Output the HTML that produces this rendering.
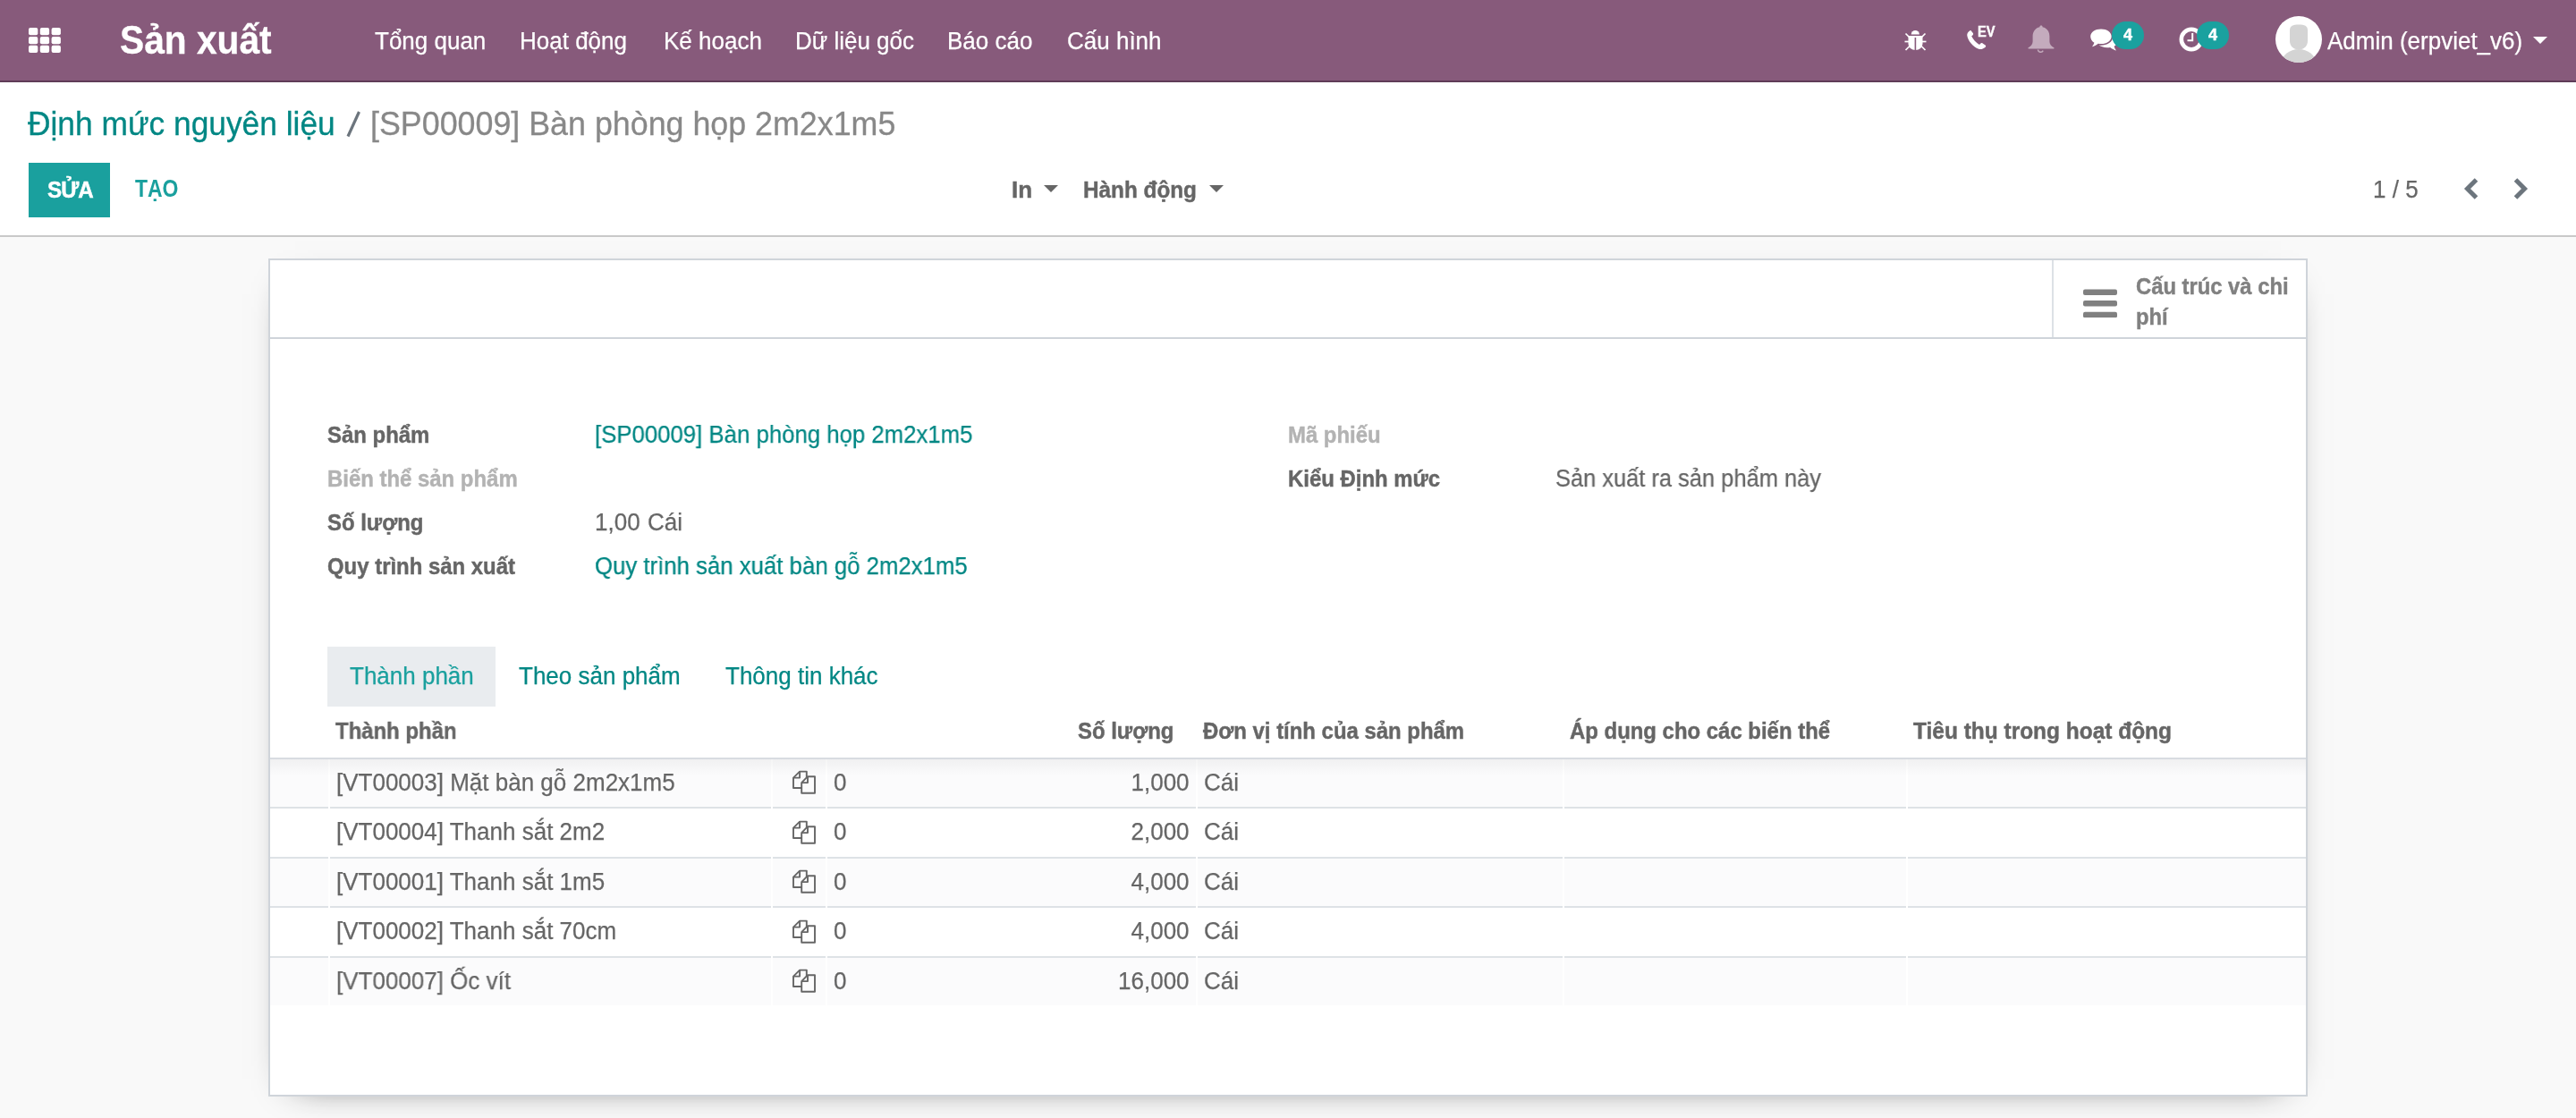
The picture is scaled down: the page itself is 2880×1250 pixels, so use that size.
<!DOCTYPE html>
<html><head><meta charset="utf-8"><title>Odoo</title>
<style>
html,body{margin:0;padding:0;width:2880px;height:1250px;overflow:hidden;background:#f9f9f9;font-family:"Liberation Sans",sans-serif;}
.a{position:absolute;}
.t{position:absolute;white-space:nowrap;line-height:1;font-size:26px;}
.b{font-weight:bold;transform-origin:0 0;-webkit-text-stroke:0.45px currentColor;}
.sx{transform:scaleX(0.92);}
#nav{left:0;top:0;width:2880px;height:90px;background:#875A7B;border-bottom:2px solid #5f3c57;}
.nv{color:#fff;}
#cp{left:0;top:92px;width:2880px;height:171px;background:#fff;border-bottom:2px solid #c9c9c9;}
.link{color:#008784;}
.txt{color:#666;}
.lbl{color:#666;font-weight:bold;-webkit-text-stroke:0.45px currentColor;transform:scaleX(0.92);transform-origin:0 0;}
.mut{color:#b3b3b3;}
.th{color:#666;font-weight:bold;-webkit-text-stroke:0.45px currentColor;transform:scaleX(0.92);transform-origin:0 0;}
.row{position:absolute;left:302px;width:2276px;}
.sep{position:absolute;left:302px;width:2276px;height:2px;background:#dee2e6;}
.vg{position:absolute;width:2px;background:#fff;}
.cell{position:absolute;white-space:nowrap;font-size:27px;line-height:26px;color:#666;transform:scaleX(0.963);transform-origin:0 0;-webkit-text-stroke:0.25px currentColor;}
.cr{transform-origin:100% 0;}
.r{font-size:27px;line-height:26px;transform:scaleX(0.963);transform-origin:0 0;-webkit-text-stroke:0.25px currentColor;}
</style></head><body>
<div id="root" style="will-change:transform;position:absolute;left:0;top:0;width:2880px;height:1250px;overflow:hidden">
<!-- ============ NAVBAR ============ -->
<div id="nav" class="a"></div>
<svg class="a" style="left:32px;top:31px" width="36" height="28" viewBox="0 0 36 28">
 <g fill="#fff">
  <rect x="0" y="0" width="10.3" height="8.2" rx="2"/><rect x="12.8" y="0" width="10.3" height="8.2" rx="2"/><rect x="25.6" y="0" width="10.3" height="8.2" rx="2"/>
  <rect x="0" y="10" width="10.3" height="8.2" rx="2"/><rect x="12.8" y="10" width="10.3" height="8.2" rx="2"/><rect x="25.6" y="10" width="10.3" height="8.2" rx="2"/>
  <rect x="0" y="19.8" width="10.3" height="8.2" rx="2"/><rect x="12.8" y="19.8" width="10.3" height="8.2" rx="2"/><rect x="25.6" y="19.8" width="10.3" height="8.2" rx="2"/>
 </g>
</svg>
<div class="t b" style="left:133.5px;top:23px;font-size:44px;color:#fff;transform:scaleX(0.925);-webkit-text-stroke:0.3px #fff">Sản xuất</div>
<div class="t nv r" style="left:419px;top:33px">Tổng quan</div>
<div class="t nv r" style="left:581px;top:33px">Hoạt động</div>
<div class="t nv r" style="left:742px;top:33px">Kế hoạch</div>
<div class="t nv r" style="left:889px;top:33px">Dữ liệu gốc</div>
<div class="t nv r" style="left:1059px;top:33px">Báo cáo</div>
<div class="t nv r" style="left:1193px;top:33px">Cấu hình</div>

<!-- bug -->
<svg class="a" style="left:2128px;top:32px" width="27" height="26" viewBox="0 0 27 26">
 <g fill="#fff">
  <path d="M8.7 6.5 A4.6 4.6 0 0 1 17.9 6.5 Z"/>
  <path d="M5.5 8 H21.5 V17 A8 7 0 0 1 5.5 17 Z"/>
 </g>
 <rect x="12.6" y="10" width="1.6" height="14" fill="#875A7B"/>
 <g stroke="#fff" stroke-width="1.7" stroke-linecap="butt">
  <line x1="2.5" y1="5.5" x2="6.5" y2="9.5"/><line x1="24.5" y1="5.5" x2="20.5" y2="9.5"/>
  <line x1="1.5" y1="14.5" x2="6" y2="14.5"/><line x1="25.5" y1="14.5" x2="21" y2="14.5"/>
  <line x1="2.5" y1="24" x2="6.5" y2="20"/><line x1="24.5" y1="24" x2="20.5" y2="20"/>
 </g>
</svg>
<!-- phone EV -->
<svg class="a" style="left:2199px;top:33px" width="23" height="23" viewBox="0 0 23 23">
 <path fill="#fff" d="M3.2 1.4 C1.2 2.6 0 4.5 0.3 6.8 C1.2 12.5 6.8 19.5 13.2 21.8 C15.5 22.6 18 21.8 20.6 19.8 C21.4 19.2 21.3 18.2 20.6 17.6 L17.6 15.4 C16.9 14.9 16 15 15.4 15.6 L14 17 C10.2 15 6.9 11 5.2 7.6 L6.6 6.2 C7.2 5.6 7.3 4.7 6.8 4 L4.8 1.4 C4.4 0.9 3.7 1 3.2 1.4 Z"/>
</svg>
<div class="t b" style="left:2211px;top:27px;font-size:17px;color:#fff;transform:scaleX(0.86)">EV</div>
<!-- bell -->
<svg class="a" style="left:2267px;top:28px" width="30" height="32" viewBox="0 0 30 32">
 <path fill="#c4abbd" d="M15 0.5 C16 0.5 16.6 1.2 16.6 2.2 C21.6 3.3 24.4 7.5 24.4 12.5 V18.5 C24.4 21.5 26.5 23.8 29.3 25.2 C29.8 25.5 29.6 26.6 29 26.6 H1 C0.4 26.6 0.2 25.5 0.7 25.2 C3.5 23.8 5.6 21.5 5.6 18.5 V12.5 C5.6 7.5 8.4 3.3 13.4 2.2 C13.4 1.2 14 0.5 15 0.5 Z"/>
 <path fill="none" stroke="#c4abbd" stroke-width="1.5" d="M11.5 27.5 A3 3 0 0 0 17.2 28.6"/>
</svg>
<!-- comments -->
<svg class="a" style="left:2337px;top:32px" width="32" height="26" viewBox="0 0 32 26">
 <path fill="#fff" d="M12 0.5 C18.6 0.5 23.6 3.9 23.6 8.7 C23.6 13.5 18.6 17 12 17 C10.8 17 9.8 16.9 8.8 16.7 C6.6 18.4 4.2 19.7 2 20.3 C3.2 18.9 4 17.4 4.4 15.8 C1.8 14.2 0.2 11.6 0.2 8.7 C0.2 3.9 5.4 0.5 12 0.5 Z"/>
 <path fill="#fff" d="M25.3 6.5 C28.6 8 30.6 10.5 30.6 13.4 C30.6 16 29 18.3 26.6 19.8 C27 21.5 27.8 23.1 29 24.5 C26.7 23.9 24.3 22.6 22.2 21 C21.2 21.2 20.2 21.3 19.1 21.3 C14.8 21.3 11.5 19.8 9.8 18.6 C18 19.2 25.2 15.4 25.3 8.7 Z"/>
</svg>
<div class="a" style="left:2361px;top:24px;width:36px;height:31px;border-radius:16px;background:#1aa19f"></div>
<div class="t b" style="left:2374px;top:30px;font-size:18px;color:#fff">4</div>
<!-- clock -->
<svg class="a" style="left:2436px;top:30px" width="28" height="28" viewBox="0 0 28 28">
 <circle cx="14" cy="14" r="11.2" fill="none" stroke="#fff" stroke-width="4.6"/>
 <path fill="none" stroke="#fff" stroke-width="2" d="M15.2 7 V15.2 H9.5"/>
</svg>
<div class="a" style="left:2456px;top:24px;width:36px;height:31px;border-radius:16px;background:#1aa19f"></div>
<div class="t b" style="left:2469px;top:30px;font-size:18px;color:#fff">4</div>
<!-- avatar -->
<svg class="a" style="left:2544px;top:18px" width="52" height="52" viewBox="0 0 52 52">
 <defs><clipPath id="cav"><circle cx="26" cy="26" r="26"/></clipPath></defs>
 <circle cx="26" cy="26" r="26" fill="#fff"/>
 <g clip-path="url(#cav)" fill="#d4d4d4">
  <path d="M16 16 C16 11 19.5 9.6 26 9.6 C32.5 9.6 36 11 36 16 V28 C36 33 32 37.5 26 37.5 C20 37.5 16 33 16 28 Z"/>
  <ellipse cx="26" cy="52" rx="19" ry="15"/>
 </g>
</svg>
<div class="t nv r" style="left:2602px;top:33px">Admin (erpviet_v6)</div>
<svg class="a" style="left:2832px;top:41px" width="16" height="8" viewBox="0 0 16 8"><path fill="#fff" d="M0 0 H16 L8 8 Z"/></svg>

<!-- ============ CONTROL PANEL ============ -->
<div id="cp" class="a"></div>
<div class="t link" style="left:31px;top:119.5px;font-size:37.5px;transform:scaleX(0.942);transform-origin:0 0;-webkit-text-stroke:0.3px currentColor">Định mức nguyên liệu</div>
<svg class="a" style="left:385px;top:122px" width="20" height="34" viewBox="0 0 20 34"><line x1="4" y1="30.5" x2="16.5" y2="3" stroke="#6c757d" stroke-width="3.2"/></svg>
<div class="t" style="left:414px;top:119.5px;font-size:37.5px;color:#888;transform:scaleX(0.955);transform-origin:0 0;-webkit-text-stroke:0.3px currentColor">[SP00009] Bàn phòng họp 2m2x1m5</div>

<div class="a" style="left:32px;top:182px;width:91px;height:61px;background:#1aa09e"></div>
<div class="t b" style="left:52.5px;top:199px;font-size:26px;color:#fff;transform:scaleX(0.93);letter-spacing:-1px">SỬA</div>
<div class="t b" style="left:151px;top:198.3px;font-size:27px;color:#1aa09e;transform:scaleX(0.85);-webkit-text-stroke:0">TẠO</div>

<div class="t b" style="left:1131px;top:199px;color:#666">In</div>
<svg class="a" style="left:1167px;top:207px" width="16" height="8" viewBox="0 0 16 8"><path fill="#666" d="M0 0 H16 L8 8 Z"/></svg>
<div class="t b" style="left:1211px;top:199px;color:#666;transform:scaleX(0.935)">Hành động</div>
<svg class="a" style="left:1352px;top:207px" width="16" height="8" viewBox="0 0 16 8"><path fill="#666" d="M0 0 H16 L8 8 Z"/></svg>

<div class="t r" style="left:2653px;top:199px;color:#666">1 / 5</div>
<svg class="a" style="left:2752px;top:198px" width="20" height="26" viewBox="0 0 20 26"><path fill="none" stroke="#6c757d" stroke-width="5" d="M16.5 3 L6.5 13 L16.5 23"/></svg>
<svg class="a" style="left:2809px;top:198px" width="20" height="26" viewBox="0 0 20 26"><path fill="none" stroke="#6c757d" stroke-width="5" d="M3.5 3 L13.5 13 L3.5 23"/></svg>

<!-- ============ SHEET ============ -->
<div class="a" style="left:300px;top:289px;width:2276px;height:933px;background:#fff;border:2px solid #cfd4da;box-shadow:0 10px 40px -30px rgba(0,0,0,0.9)"></div>
<!-- button box -->
<div class="a" style="left:302px;top:377px;width:2276px;height:2px;background:#cfd4da"></div>
<div class="a" style="left:2294px;top:291px;width:2px;height:86px;background:#dde1e6"></div>
<svg class="a" style="left:2329px;top:323px" width="38" height="32" viewBox="0 0 38 32">
 <g fill="#808080"><rect x="0" y="0.4" width="38" height="6.5" rx="2"/><rect x="0" y="13" width="38" height="6.5" rx="2"/><rect x="0" y="25.8" width="38" height="6.5" rx="2"/></g>
</svg>
<div class="t b" style="left:2388px;top:307px;color:#808080;transform:scaleX(0.915)">Cấu trúc và chi</div>
<div class="t b" style="left:2388px;top:341px;color:#808080;transform:scaleX(0.915)">phí</div>

<!-- fields -->
<div class="t lbl" style="left:366px;top:473px">Sản phẩm</div>
<div class="t lbl mut" style="left:366px;top:522px">Biến thể sản phẩm</div>
<div class="t lbl" style="left:366px;top:571px">Số lượng</div>
<div class="t lbl" style="left:366px;top:620px">Quy trình sản xuất</div>
<div class="t link r" style="left:665px;top:473px;transform:scaleX(0.954)">[SP00009] Bàn phòng họp 2m2x1m5</div>
<div class="t txt r" style="left:665px;top:571px">1,00</div>
<div class="t txt r" style="left:724px;top:571px">Cái</div>
<div class="t link r" style="left:665px;top:620px;transform:scaleX(0.954)">Quy trình sản xuất bàn gỗ 2m2x1m5</div>
<div class="t lbl mut" style="left:1440px;top:473px">Mã phiếu</div>
<div class="t lbl" style="left:1440px;top:522px">Kiểu Định mức</div>
<div class="t txt r" style="left:1739px;top:522px;transform:scaleX(0.942)">Sản xuất ra sản phẩm này</div>

<!-- tabs -->
<div class="a" style="left:366px;top:723px;width:188px;height:67px;background:#e9ecef"></div>
<div class="t r" style="left:391px;top:743px;color:#1aa09e">Thành phần</div>
<div class="t link r" style="left:580px;top:743px">Theo sản phẩm</div>
<div class="t link r" style="left:811px;top:743px">Thông tin khác</div>

<!-- table -->
<div class="t th" style="left:375px;top:804px">Thành phần</div>
<div class="t th" style="left:1205px;top:804px">Số lượng</div>
<div class="t th" style="left:1345px;top:804px">Đơn vị tính của sản phẩm</div>
<div class="t th" style="left:1755px;top:804px">Áp dụng cho các biến thể</div>
<div class="t th" style="left:2139px;top:804px;transform:scaleX(0.941)">Tiêu thụ trong hoạt động</div>
<div class="a" style="left:302px;top:847px;width:2276px;height:2px;background:#d8dce1"></div>
<!--ROWS-->
<div class="row" style="top:849px;height:53px;background:#fbfbfc"></div>
<div class="sep" style="top:902px"></div>
<div class="sep" style="top:958px"></div>
<div class="row" style="top:960px;height:53px;background:#fbfbfc"></div>
<div class="sep" style="top:1013px"></div>
<div class="sep" style="top:1069px"></div>
<div class="row" style="top:1071px;height:53px;background:#fbfbfc"></div>
<div class="vg" style="left:367px;top:849px;height:275px"></div>
<div class="vg" style="left:862px;top:849px;height:275px"></div>
<div class="vg" style="left:923px;top:849px;height:275px"></div>
<div class="vg" style="left:1337px;top:849px;height:275px"></div>
<div class="vg" style="left:1747px;top:849px;height:275px"></div>
<div class="vg" style="left:2131px;top:849px;height:275px"></div>
<div class="a" style="left:302px;top:849px;width:2276px;height:18px;background:linear-gradient(rgba(0,0,0,0.045),rgba(0,0,0,0))"></div>
<div class="cell" style="left:376px;top:861.5px">[VT00003] Mặt bàn gỗ 2m2x1m5</div>
<svg class="a" style="left:880px;top:856.0px" width="40" height="38" viewBox="0 0 40 38"><g fill="none" stroke="#666" stroke-width="1.9" stroke-linejoin="round"><path d="M16.2 25 H7 V13.6 L14.1 6.6 H21.8 V13.3"/><path d="M7 13.6 H14.1 V6.6"/><path d="M23 12.2 H31 V30.8 H16.2 V19.1 Z"/><path d="M16.2 19.1 H23 V12.2"/></g></svg>
<div class="cell" style="left:932px;top:861.5px">0</div>
<div class="cell cr" style="right:1550px;top:861.5px">1,000</div>
<div class="cell" style="left:1346px;top:861.5px">Cái</div>
<div class="cell" style="left:376px;top:917.0px">[VT00004] Thanh sắt 2m2</div>
<svg class="a" style="left:880px;top:911.5px" width="40" height="38" viewBox="0 0 40 38"><g fill="none" stroke="#666" stroke-width="1.9" stroke-linejoin="round"><path d="M16.2 25 H7 V13.6 L14.1 6.6 H21.8 V13.3"/><path d="M7 13.6 H14.1 V6.6"/><path d="M23 12.2 H31 V30.8 H16.2 V19.1 Z"/><path d="M16.2 19.1 H23 V12.2"/></g></svg>
<div class="cell" style="left:932px;top:917.0px">0</div>
<div class="cell cr" style="right:1550px;top:917.0px">2,000</div>
<div class="cell" style="left:1346px;top:917.0px">Cái</div>
<div class="cell" style="left:376px;top:972.5px">[VT00001] Thanh sắt 1m5</div>
<svg class="a" style="left:880px;top:967.0px" width="40" height="38" viewBox="0 0 40 38"><g fill="none" stroke="#666" stroke-width="1.9" stroke-linejoin="round"><path d="M16.2 25 H7 V13.6 L14.1 6.6 H21.8 V13.3"/><path d="M7 13.6 H14.1 V6.6"/><path d="M23 12.2 H31 V30.8 H16.2 V19.1 Z"/><path d="M16.2 19.1 H23 V12.2"/></g></svg>
<div class="cell" style="left:932px;top:972.5px">0</div>
<div class="cell cr" style="right:1550px;top:972.5px">4,000</div>
<div class="cell" style="left:1346px;top:972.5px">Cái</div>
<div class="cell" style="left:376px;top:1028.0px">[VT00002] Thanh sắt 70cm</div>
<svg class="a" style="left:880px;top:1022.5px" width="40" height="38" viewBox="0 0 40 38"><g fill="none" stroke="#666" stroke-width="1.9" stroke-linejoin="round"><path d="M16.2 25 H7 V13.6 L14.1 6.6 H21.8 V13.3"/><path d="M7 13.6 H14.1 V6.6"/><path d="M23 12.2 H31 V30.8 H16.2 V19.1 Z"/><path d="M16.2 19.1 H23 V12.2"/></g></svg>
<div class="cell" style="left:932px;top:1028.0px">0</div>
<div class="cell cr" style="right:1550px;top:1028.0px">4,000</div>
<div class="cell" style="left:1346px;top:1028.0px">Cái</div>
<div class="cell" style="left:376px;top:1083.5px">[VT00007] Ốc vít</div>
<svg class="a" style="left:880px;top:1078.0px" width="40" height="38" viewBox="0 0 40 38"><g fill="none" stroke="#666" stroke-width="1.9" stroke-linejoin="round"><path d="M16.2 25 H7 V13.6 L14.1 6.6 H21.8 V13.3"/><path d="M7 13.6 H14.1 V6.6"/><path d="M23 12.2 H31 V30.8 H16.2 V19.1 Z"/><path d="M16.2 19.1 H23 V12.2"/></g></svg>
<div class="cell" style="left:932px;top:1083.5px">0</div>
<div class="cell cr" style="right:1550px;top:1083.5px">16,000</div>
<div class="cell" style="left:1346px;top:1083.5px">Cái</div>
<!--/ROWS-->
</div>
</body></html>
